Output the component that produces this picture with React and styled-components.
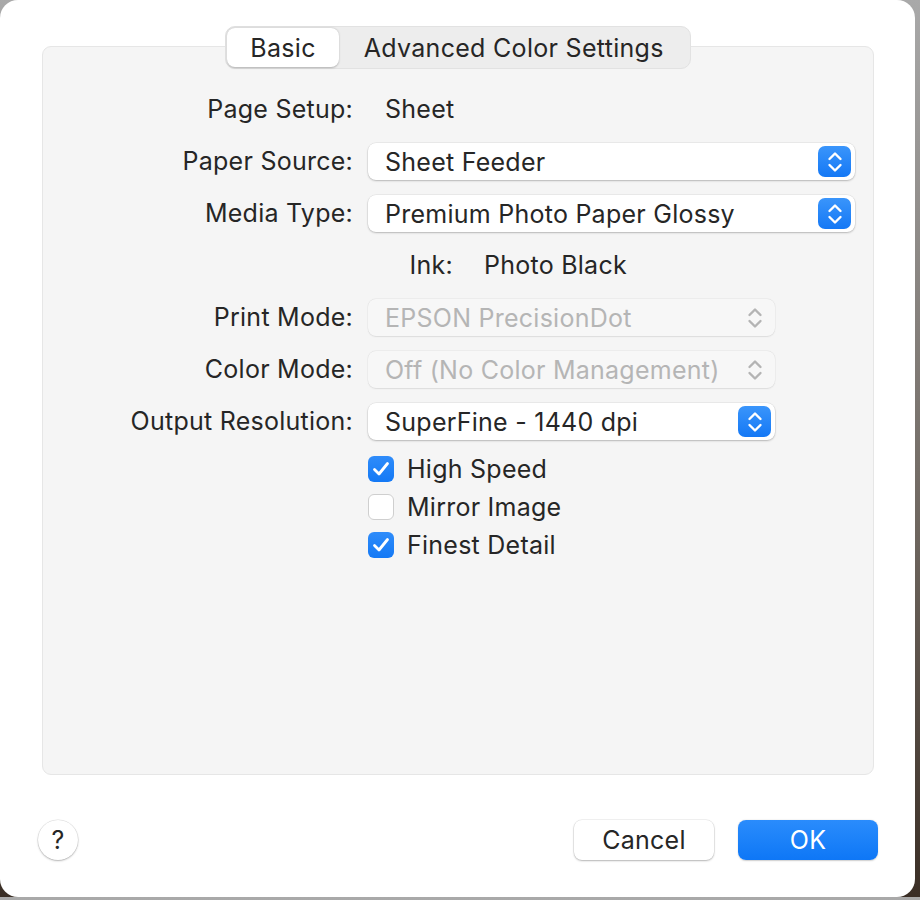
import React from "react"
import styled, { createGlobalStyle } from "styled-components"

const GlobalStyle = createGlobalStyle`
  html, body {
    margin: 0;
    padding: 0;
    background: linear-gradient(180deg, #a9a9a9 0%, #6d655e 60%, #3a2e25 100%);
    font-family: Inter, "Noto Sans", "Liberation Sans", sans-serif;
    color: #262626;
  }
`

const Window = styled.div`
  width: 915px;
  height: 897px;
  box-sizing: border-box;
  background: #ffffff;
  border-radius: 18px;
  padding: 26px 41px 0 42px;
  display: flex;
  flex-direction: column;
`

const TabBar = styled.div`
  align-self: center;
  display: flex;
  height: 43px;
  box-sizing: border-box;
  padding: 1px;
  background: #ededed;
  border: 1px solid #e2e2e2;
  border-radius: 10px;
  margin-bottom: -23px;
  position: relative;
  z-index: 1;
`

const Tab = styled.div`
  display: flex;
  align-items: center;
  padding: 0 ${(p) => (p.active ? "23px" : "25px")};
  font-size: 25px;
  letter-spacing: 0.3px;
  border-radius: 8px;
  background: ${(p) => (p.active ? "#ffffff" : "transparent")};
  box-shadow: ${(p) => (p.active ? "0 0.5px 2px rgba(0,0,0,0.25)" : "none")};
`

const Panel = styled.div`
  height: 729px;
  box-sizing: border-box;
  background: #f5f5f5;
  border: 1px solid #e6e6e6;
  border-radius: 9px;
  padding: 44px 0 0 0;
`

const Form = styled.div`
  display: grid;
  grid-template-columns: 310px 1fr;
  column-gap: 15px;
  row-gap: 15px;
  align-items: center;
  font-size: 25px;
  letter-spacing: 0.25px;
`

const Label = styled.div`
  text-align: right;
  line-height: 37px;
  white-space: nowrap;
`

const Value = styled.div`
  line-height: 37px;
  padding-left: 17px;
`

const InkRow = styled.div`
  grid-column: 2;
  display: flex;
  align-items: center;
  gap: 31px;
  line-height: 37px;
`

const InkLabel = styled.span`
  width: 85px;
  text-align: right;
`

const Popup = styled.div`
  width: ${(p) => p.width}px;
  height: 37px;
  box-sizing: border-box;
  display: flex;
  align-items: center;
  justify-content: space-between;
  padding: 0 4px 0 17px;
  background: ${(p) => (p.disabled ? "#f7f7f7" : "#ffffff")};
  border-radius: 8px;
  box-shadow: ${(p) =>
    p.disabled
      ? "0 0 0 0.5px rgba(0,0,0,0.05), 0 0.5px 1.5px rgba(0,0,0,0.08)"
      : "0 0 0 0.5px rgba(0,0,0,0.08), 0 1px 2px rgba(0,0,0,0.22)"};
  color: ${(p) => (p.disabled ? "#b5b5b5" : "#262626")};
  white-space: nowrap;
`

const Stepper = styled.div`
  width: 33px;
  height: 31px;
  flex-shrink: 0;
  border-radius: 7px;
  display: flex;
  align-items: center;
  justify-content: center;
  background: ${(p) =>
    p.disabled ? "transparent" : "linear-gradient(180deg, #3a95fb 0%, #1478f5 100%)"};
  color: ${(p) => (p.disabled ? "#b4b4b4" : "#ffffff")};
`

const Checks = styled.div`
  grid-column: 2;
  display: flex;
  flex-direction: column;
  gap: 12px;
  margin-top: 1px;
`

const CheckRow = styled.div`
  display: flex;
  align-items: center;
  gap: 13px;
  height: 26px;
`

const Box = styled.div`
  width: 26px;
  height: 26px;
  box-sizing: border-box;
  border-radius: 6px;
  display: flex;
  align-items: center;
  justify-content: center;
  background: ${(p) => (p.checked ? "linear-gradient(180deg, #2f8cfa 0%, #1479f5 100%)" : "#ffffff")};
  border: ${(p) => (p.checked ? "none" : "1px solid #cfcfcf")};
`

const Footer = styled.div`
  display: flex;
  align-items: center;
  padding-top: 45px;
  margin: 0 -4px;
`

const Help = styled.div`
  width: 40px;
  height: 40px;
  border-radius: 50%;
  background: #ffffff;
  box-shadow: 0 0 0 0.5px rgba(0,0,0,0.12), 0 1px 2px rgba(0,0,0,0.25);
  display: flex;
  align-items: center;
  justify-content: center;
  font-size: 25px;
`

const Spacer = styled.div`
  flex: 1;
`

const Button = styled.div`
  width: 140px;
  height: 40px;
  border-radius: 8px;
  display: flex;
  align-items: center;
  justify-content: center;
  font-size: 25px;
  letter-spacing: 0.25px;
  margin-left: ${(p) => (p.primary ? "24px" : "0")};
  background: ${(p) => (p.primary ? "linear-gradient(180deg, #2a8cfc 0%, #0e77f6 100%)" : "#ffffff")};
  color: ${(p) => (p.primary ? "#ffffff" : "#262626")};
  box-shadow: ${(p) =>
    p.primary ? "0 0.5px 1.5px rgba(0,0,0,0.2)" : "0 0 0 0.5px rgba(0,0,0,0.1), 0 1px 2px rgba(0,0,0,0.25)"};
`

const Chevrons = () => (
  <svg width="16" height="24" viewBox="0 0 16 24" fill="none" stroke="currentColor" strokeWidth="2.4" strokeLinecap="round" strokeLinejoin="round">
    <path d="M2.5 9 L8 3.5 L13.5 9" />
    <path d="M2.5 15 L8 20.5 L13.5 15" />
  </svg>
)

const Check = () => (
  <svg width="18" height="16" viewBox="0 0 18 16" fill="none" stroke="#ffffff" strokeWidth="2.8" strokeLinecap="round" strokeLinejoin="round">
    <path d="M2.5 8.5 L7 13 L15.5 2.5" />
  </svg>
)

const Select = ({ width, disabled, children }) => (
  <Popup width={width} disabled={disabled}>
    <span>{children}</span>
    <Stepper disabled={disabled}>
      <Chevrons />
    </Stepper>
  </Popup>
)

const Checkbox = ({ checked, children }) => (
  <CheckRow>
    <Box checked={checked}>{checked && <Check />}</Box>
    <span>{children}</span>
  </CheckRow>
)

export default function App() {
  return (
    <>
      <GlobalStyle />
      <Window>
        <TabBar>
          <Tab active>Basic</Tab>
          <Tab>Advanced Color Settings</Tab>
        </TabBar>
        <Panel>
          <Form>
            <Label>Page Setup:</Label>
            <Value>Sheet</Value>

            <Label>Paper Source:</Label>
            <Select width={487}>Sheet Feeder</Select>

            <Label>Media Type:</Label>
            <Select width={487}>Premium Photo Paper Glossy</Select>

            <InkRow>
              <InkLabel>Ink:</InkLabel>
              <span>Photo Black</span>
            </InkRow>

            <Label>Print Mode:</Label>
            <Select width={407} disabled>EPSON PrecisionDot</Select>

            <Label>Color Mode:</Label>
            <Select width={407} disabled>Off (No Color Management)</Select>

            <Label>Output Resolution:</Label>
            <Select width={407}>SuperFine - 1440 dpi</Select>

            <Checks>
              <Checkbox checked>High Speed</Checkbox>
              <Checkbox>Mirror Image</Checkbox>
              <Checkbox checked>Finest Detail</Checkbox>
            </Checks>
          </Form>
        </Panel>
        <Footer>
          <Help>?</Help>
          <Spacer />
          <Button>Cancel</Button>
          <Button primary>OK</Button>
        </Footer>
      </Window>
    </>
  )
}
